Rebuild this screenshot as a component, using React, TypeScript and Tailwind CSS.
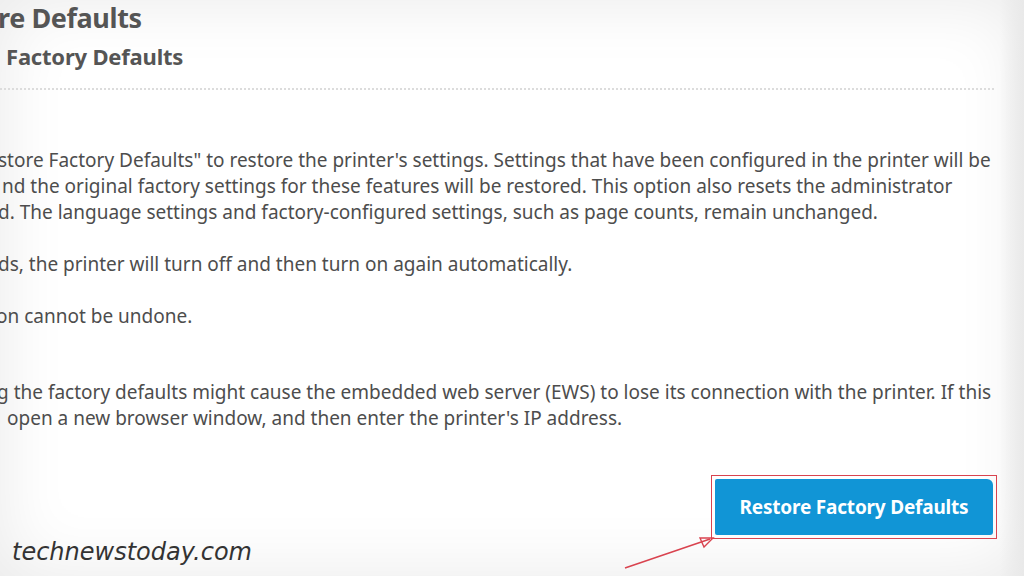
const lines1 = [
  { text: "store Factory Defaults\" to restore the printer's settings. Settings that have been configured in the printer will be", ml: "ml-[-2px]" },
  { text: "nd the original factory settings for these features will be restored. This option also resets the administrator", ml: "ml-[2px]" },
  { text: "d. The language settings and factory-configured settings, such as page counts, remain unchanged.", ml: "ml-[-2px]" },
];

const lines3 = [
  { text: "g the factory defaults might cause the embedded web server (EWS) to lose its connection with the printer. If this", ml: "ml-[-3px]" },
  { text: "open a new browser window, and then enter the printer's IP address.", ml: "ml-[7px]" },
];

function Line({ text, ml }: { text: string; ml: string }) {
  return <div className={`whitespace-nowrap ${ml}`}>{text}</div>;
}

function Arrow() {
  return (
    <svg width="100" height="50" viewBox="0 0 100 50" className="absolute left-[620px] top-[530px]">
      <line x1="5" y1="38" x2="90" y2="9" stroke="#d9434f" strokeWidth="1.6" />
      <polygon points="93,8 80,8 84,17" fill="none" stroke="#d9434f" strokeWidth="1.4" />
    </svg>
  );
}

export default function App() {
  return (
    <div className="relative w-[1024px] h-[576px] overflow-hidden bg-white font-['Noto_Sans',sans-serif] text-[#4d4d4d]">
      <div className="absolute inset-0 pointer-events-none shadow-[inset_0_0_70px_rgba(0,0,0,0.09)]" />
      <div className="absolute right-0 top-0 h-full w-[24px] bg-gradient-to-r from-transparent to-[#e9e9e9]" />

      <div className="relative flex flex-col pr-[30px]">
        <h1 className="ml-[-2px] mt-[-2px] h-[40px] text-[27px] font-bold leading-[40px] text-[#555] tracking-[-0.4px]">re Defaults</h1>
        <h2 className="ml-[6px] h-[36px] text-[22px] font-bold leading-[36px] text-[#555] tracking-[-0.2px]">Factory Defaults</h2>
        <div className="mt-[14px] h-0 border-t-2 border-dotted border-[#dcdcdc]" />

        <div className="mt-[57px] text-[19px] leading-[26px]">
          {lines1.map((l) => (
            <Line key={l.text} text={l.text} ml={l.ml} />
          ))}
          <div className="mt-[26px] whitespace-nowrap ml-[-2px]">ds, the printer will turn off and then turn on again automatically.</div>
          <div className="mt-[26px] whitespace-nowrap ml-[-4px]">on cannot be undone.</div>
          <div className="mt-[50px]">
            {lines3.map((l) => (
              <Line key={l.text} text={l.text} ml={l.ml} />
            ))}
          </div>
        </div>

        <div className="mt-[44px] flex justify-end">
          <div className="mr-[-3px] border-[1.5px] border-[#d9434f] p-[3px]">
            <button className="h-[56px] w-[278px] rounded-tr-[6px] rounded-br-[3px] rounded-l-[2px] bg-[#1195d6] font-['Noto_Sans',sans-serif] text-[19px] font-bold tracking-[-0.2px] text-white">
              Restore Factory Defaults
            </button>
          </div>
        </div>
      </div>

      <Arrow />

      <div className="absolute left-[12px] top-[534px] font-['DejaVu_Sans',sans-serif] text-[24px] italic font-light text-[#333]">
        technewstoday.com
      </div>
    </div>
  );
}
